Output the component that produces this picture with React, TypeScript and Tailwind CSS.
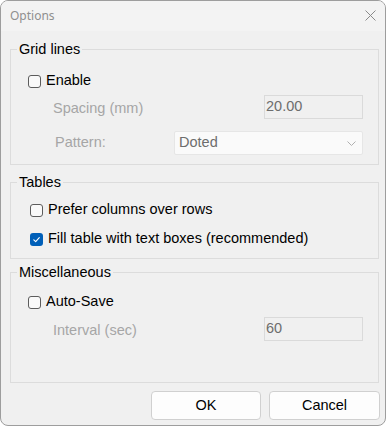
import React from "react";

function CheckBox({ checked }: { checked?: boolean }) {
  if (checked) {
    return (
      <span className="w-[13px] h-[13px] rounded-[3px] bg-[#005fb8] flex items-center justify-center shrink-0">
        <svg width="9" height="9" viewBox="0 0 9 9" fill="none">
          <path d="M1.8 4.8 L3.7 6.6 L7.3 2.6" stroke="white" strokeWidth="1.1" strokeLinecap="round" strokeLinejoin="round" />
        </svg>
      </span>
    );
  }
  return <span className="w-[13px] h-[13px] rounded-[3px] border border-[#5c5c5c] bg-[#f9f9f9] shrink-0" />;
}

function Group({ title, className, legendClass, children }: { title: string; className: string; legendClass: string; children: React.ReactNode }) {
  return (
    <fieldset className={`border border-[#dcdcdc] ${className}`}>
      <legend className={`px-[2px] h-[17px] leading-[17px] text-black ${legendClass}`}>{title}</legend>
      {children}
    </fieldset>
  );
}

export default function App() {
  return (
    <div className="w-[386px] h-[426px] bg-white">
      <div className="h-full flex flex-col rounded-[8px] border border-[#9d9d9d] bg-[#f0f0f0] overflow-hidden font-['Liberation_Sans',Arial,sans-serif] text-[14.5px]">
        <div className="h-[30px] shrink-0 bg-[#f3f3f3] flex items-center justify-between pl-[9px] pr-[9px]">
          <span className="font-['Noto_Sans',sans-serif] text-[12px] text-[#8f8f8f] -mt-[1px]">Options</span>
          <svg width="11" height="11" viewBox="0 0 11 11" className="-mt-[1px]">
            <path d="M0.5 0.5 L10.5 10.5 M10.5 0.5 L0.5 10.5" stroke="#8a8a8a" strokeWidth="1" />
          </svg>
        </div>

        <div className="flex flex-col pl-[9px] pr-[6px]">
          <Group title="Grid lines" legendClass="-ml-[11px]" className="mt-[10px] pl-[17px] pr-[15px] pt-[13px] pb-[9px]">
            <label className="h-[20px] flex items-center gap-[5px]">
              <CheckBox />
              <span>Enable</span>
            </label>
            <div className="mt-[4px] h-[24px] flex items-center justify-between">
              <span className="pl-[25px] text-[#a6a6a6] mt-[3px]">Spacing (mm)</span>
              <div className="w-[99px] h-[24px] border border-[#dadada] flex items-center pl-[1px] text-[#6d6d6d]">20.00</div>
            </div>
            <div className="mt-[12px] h-[24px] flex items-center justify-between">
              <span className="pl-[27px] text-[#a6a6a6]">Pattern:</span>
              <div className="w-[189px] h-[24px] rounded-[2px] border border-[#e6e6e6] bg-[#fafafa] flex items-center justify-between pl-[4px] pr-[6px] text-[#6d6d6d]">
                <span>Doted</span>
                <svg width="9" height="5" viewBox="0 0 9 5" fill="none">
                  <path d="M0.5 0.5 L4.5 4.5 L8.5 0.5" stroke="#b0b0b0" strokeWidth="1" />
                </svg>
              </div>
            </div>
          </Group>

          <Group title="Tables" legendClass="-ml-[13px]" className="mt-[9px] pl-[19px] pr-[15px] pt-[9px] pb-[9px]">
            <label className="h-[20px] flex items-center gap-[5px]">
              <CheckBox />
              <span>Prefer columns over rows</span>
            </label>
            <label className="mt-[9px] h-[20px] flex items-center gap-[5px]">
              <CheckBox checked />
              <span>Fill table with text boxes (recommended)</span>
            </label>
          </Group>

          <Group title="Miscellaneous" legendClass="-ml-[11px]" className="mt-[5px] pl-[17px] pr-[15px] pt-[11px] pb-[41px]">
            <label className="h-[20px] flex items-center gap-[5px]">
              <CheckBox />
              <span>Auto-Save</span>
            </label>
            <div className="mt-[5px] h-[24px] flex items-center justify-between">
              <span className="pl-[25px] text-[#a6a6a6] mt-[3px]">Interval (sec)</span>
              <div className="w-[99px] h-[24px] border border-[#dadada] flex items-center pl-[1px] text-[#6d6d6d]">60</div>
            </div>
          </Group>
        </div>

        <div className="mt-[8px] flex justify-end gap-[8px] pr-[5px]">
          <button className="w-[110px] h-[29px] rounded-[4px] border border-[#d0d0d0] bg-[#fdfdfd] text-black">OK</button>
          <button className="w-[111px] h-[29px] rounded-[4px] border border-[#d0d0d0] bg-[#fdfdfd] text-black">Cancel</button>
        </div>
      </div>
    </div>
  );
}
